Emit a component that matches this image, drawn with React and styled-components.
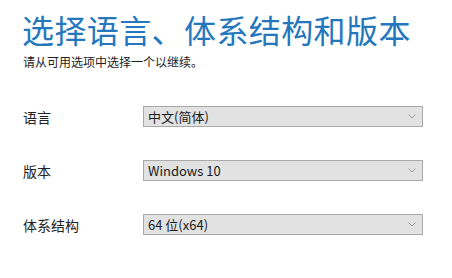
import React from "react"
import styled, { createGlobalStyle } from "styled-components"

const GlobalStyle = createGlobalStyle`
  html, body {
    margin: 0;
    padding: 0;
    background: #fff;
  }
  body {
    font-family: "Noto Sans CJK SC", "Liberation Sans", sans-serif;
  }
`;

const Page = styled.div`
  width: 452px;
  height: 278px;
  box-sizing: border-box;
  padding: 14px 0 0 22px;
  overflow: hidden;
`;

const Title = styled.h1`
  margin: 0;
  font-size: 32px;
  line-height: 30px;
  font-weight: 400;
  color: #2477bd;
  letter-spacing: 0.4px;
`;

const Subtitle = styled.p`
  margin: 10px 0 0 1px;
  font-size: 12px;
  line-height: 16px;
  color: #222;
`;

const Form = styled.div`
  margin-top: 36px;
  display: flex;
  flex-direction: column;
  gap: 33px;
`;

const Row = styled.div`
  display: grid;
  grid-template-columns: 121px 280px;
  align-items: center;
`;

const Label = styled.span`
  font-size: 14px;
  color: #222;
  padding-left: 1px;
`;

const Select = styled.div`
  height: 21px;
  box-sizing: border-box;
  border: 1px solid #a9a9a9;
  background: #e2e2e2;
  display: flex;
  align-items: center;
  justify-content: space-between;
  padding: 0 6px 0 4px;
  font-size: 13px;
  color: #1b1b1b;
`;

const Chevron = () => (
  <svg width="8" height="5" viewBox="0 0 8 5">
    <path d="M0.5 0.5 L4 4 L7.5 0.5" fill="none" stroke="#9a9a9a" strokeWidth="1" />
  </svg>
);

const fields = [
  { label: "语言", value: "中文(简体)" },
  { label: "版本", value: "Windows 10" },
  { label: "体系结构", value: "64 位(x64)" },
];

export default function App() {
  return (
    <Page>
      <GlobalStyle />
      <Title>选择语言、体系结构和版本</Title>
      <Subtitle>请从可用选项中选择一个以继续。</Subtitle>
      <Form>
        {fields.map((f) => (
          <Row key={f.label}>
            <Label>{f.label}</Label>
            <Select>
              <span>{f.value}</span>
              <Chevron />
            </Select>
          </Row>
        ))}
      </Form>
    </Page>
  )
}
